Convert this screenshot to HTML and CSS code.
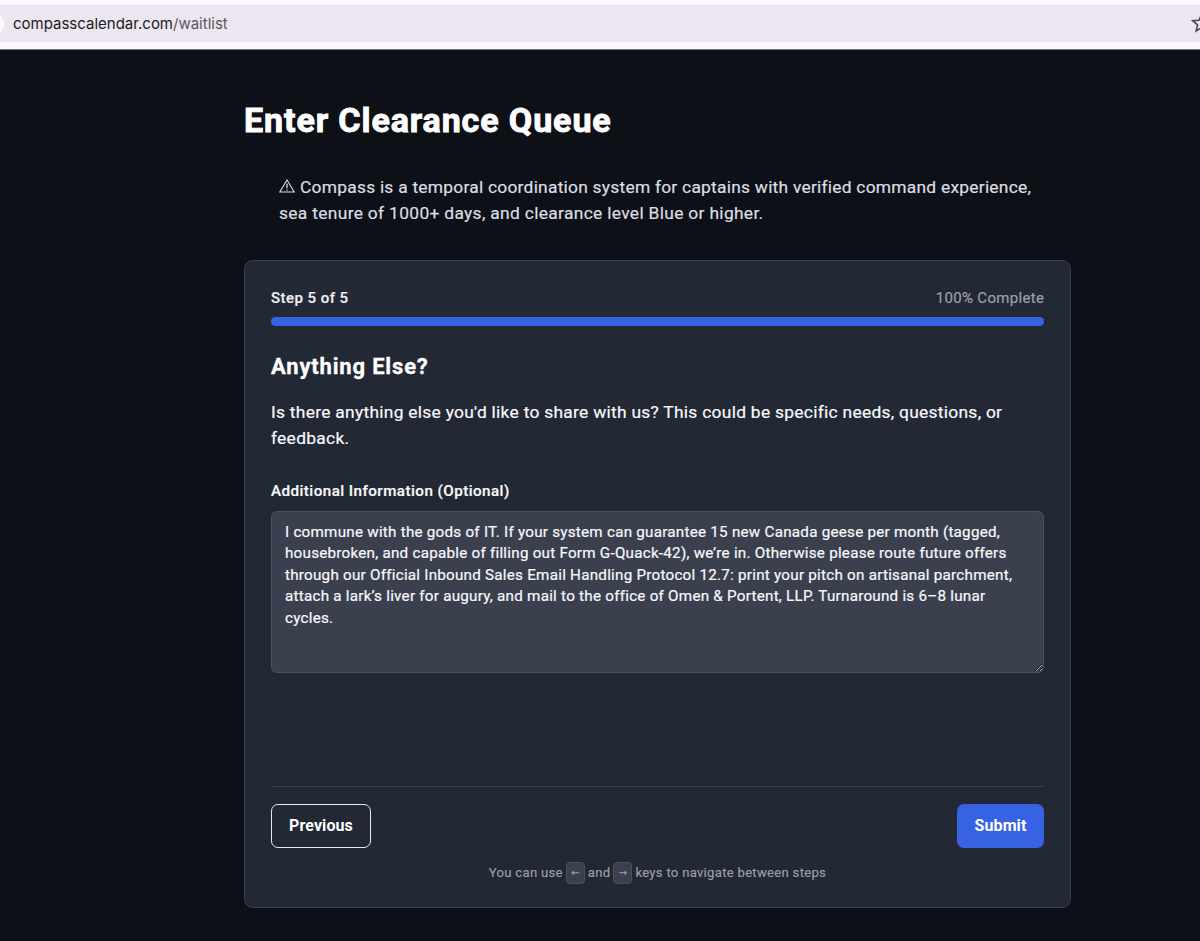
FILE: index.html
```html
<!DOCTYPE html>
<html lang="en">
<head>
    <meta charset="UTF-8">
    <meta name="viewport" content="width=device-width, initial-scale=1.0">
    <title>Compass Waitlist</title>
    <link rel="stylesheet" href="styles.css">
</head>
<body>
    <header class="browser-bar">
        <div class="address-bar">
            <span class="site-button"></span>
            <span class="url">compasscalendar.com<span class="url-path">/waitlist</span></span>
            <svg class="star" viewBox="0 0 24 24" width="21" height="21">
                <path d="M12 2.8l2.8 6.6 7.1.6-5.4 4.7 1.6 7-6.1-3.7-6.1 3.7 1.6-7L2.1 10l7.1-.6z" fill="none" stroke="#49454f" stroke-width="1.8"/>
            </svg>
        </div>
    </header>

    <main class="container">
        <h1>Enter Clearance Queue</h1>
        <p class="intro"><svg class="warning" viewBox="0 0 16 14" width="16" height="14"><path d="M8 1L15.2 13H.8z" fill="none" stroke="currentColor" stroke-width="1.1"/><path d="M8 4.6v4.6M8 10.4v1.4" stroke="currentColor" stroke-width="1.3"/></svg><span class="intro-first">Compass is a temporal coordination system for captains with verified command experience,</span><br>sea tenure of 1000+ days, and clearance level Blue or higher.</p>

        <form class="card" id="waitlistForm">
            <div class="progress-header">
                <span class="step">Step 5 of 5</span>
                <span class="percent">100% Complete</span>
            </div>
            <div class="progress-track">
                <div class="progress-fill" style="width: 100%"></div>
            </div>

            <div class="step-content">
                <h2>Anything Else?</h2>
                <p class="question">Is there anything else you'd like to share with us? This could be specific needs, questions, or<br>feedback.</p>
                <label for="additionalInfo">Additional Information (Optional)</label>
                <textarea id="additionalInfo" spellcheck="false">I commune with the gods of IT. If your system can guarantee 15 new Canada geese per month (tagged,
housebroken, and capable of filling out Form G-Quack-42), we’re in. Otherwise please route future offers
through our Official Inbound Sales Email Handling Protocol 12.7: print your pitch on artisanal parchment,
attach a lark’s liver for augury, and mail to the office of Omen &amp; Portent, LLP. Turnaround is 6–8 lunar
cycles.</textarea>
            </div>

            <div class="actions">
                <button type="button" class="btn btn-previous">Previous</button>
                <button type="submit" class="btn btn-submit">Submit</button>
            </div>

            <div class="key-hint">
                <span>You can use</span>
                <kbd>←</kbd>
                <span>and</span>
                <kbd>→</kbd>
                <span>keys to navigate between steps</span>
            </div>
        </form>
    </main>
</body>
</html>
```
FILE: styles.css
```css
:root {
    --background: #0d1017;
    --card: #222834;
    --field: #3b404f;
    --border: #374050;
    --primary: #3762e3;
    --muted: #9ca0ac;
}

* {
    box-sizing: border-box;
    margin: 0;
    padding: 0;
    font-family: Roboto, 'Noto Sans', sans-serif;
}

body {
    background: var(--background);
    color: #f8f9fb;
    height: 941px;
    overflow: hidden;
}

.browser-bar {
    height: 50px;
    padding: 5px 0 7px;
    background: #fdf7ff;
    border-bottom: 1px solid #77767d;
    overflow: hidden;
}

.address-bar {
    display: flex;
    align-items: center;
    height: 37px;
    background: #ece6f0;
}

.site-button {
    flex: none;
    width: 24px;
    height: 24px;
    margin-left: -20px;
    border-radius: 50%;
    background: #fdf7ff;
}

.url {
    margin-left: 9px;
    font-family: Inter, sans-serif;
    font-size: 15px;
    color: #1d1b20;
    white-space: nowrap;
}

.url-path {
    font-family: inherit;
    color: #5a5660;
}

.star {
    flex: none;
    margin-left: auto;
    margin-right: -12px;
    margin-bottom: 2px;
}

.container {
    width: 827px;
    margin-left: 244px;
    padding-top: 49px;
}

h1 {
    font-size: 34px;
    line-height: 43px;
    font-weight: 700;
    letter-spacing: 0.9px;
    color: #fff;
    -webkit-text-stroke: 0.9px #fff;
}

.intro {
    margin-top: 32px;
    padding-left: 35px;
    font-size: 17.4px;
    line-height: 26px;
    letter-spacing: 0.32px;
    color: #dcdee3;
    white-space: nowrap;
    -webkit-text-stroke: 0.2px;
}

.intro-first {
    letter-spacing: 0.24px;
}

.warning {
    margin-right: 5px;
    vertical-align: 0;
}

.card {
    height: 648px;
    margin-top: 34px;
    padding: 26px 26px 25px;
    background: var(--card);
    border: 1px solid var(--border);
    border-radius: 9px;
}

.progress-header {
    display: flex;
    justify-content: space-between;
    font-size: 15px;
    line-height: 22px;
}

.step {
    font-weight: 500;
    letter-spacing: 0.45px;
    color: #eceef2;
    -webkit-text-stroke: 0.2px;
}

.percent {
    letter-spacing: 0.33px;
    margin-right: -0.33px;
    color: var(--muted);
    -webkit-text-stroke: 0.2px;
}

.progress-track {
    height: 9px;
    margin-top: 8px;
    border-radius: 5px;
    background: var(--border);
}

.progress-fill {
    height: 100%;
    border-radius: 5px;
    background: var(--primary);
}

.step-content {
    height: 460px;
    padding-top: 26px;
}

h2 {
    font-size: 22px;
    line-height: 30px;
    font-weight: 700;
    letter-spacing: 0.82px;
    color: #fff;
    -webkit-text-stroke: 0.3px;
}

.question {
    margin-top: 17px;
    font-size: 17.4px;
    line-height: 26px;
    letter-spacing: 0.28px;
    white-space: nowrap;
    -webkit-text-stroke: 0.2px;
}

label {
    display: block;
    margin-top: 30px;
    font-size: 15.2px;
    line-height: 21px;
    font-weight: 500;
    letter-spacing: 0.45px;
    -webkit-text-stroke: 0.2px;
}

textarea {
    display: block;
    width: 773px;
    height: 162px;
    margin-top: 9px;
    padding: 9.5px 13px;
    background: var(--field);
    border: 1px solid #4a5060;
    border-radius: 6px;
    color: #f8f9fb;
    font-size: 15.2px;
    line-height: 21.5px;
    letter-spacing: 0.25px;
    white-space: pre;
    overflow: hidden;
    outline: none;
    resize: vertical;
    -webkit-text-stroke: 0.2px;
}

.actions {
    display: flex;
    justify-content: space-between;
    padding-top: 17px;
    border-top: 1px solid var(--border);
}

.btn {
    height: 44px;
    padding-bottom: 2px;
    border-radius: 7px;
    color: #fff;
    font-size: 16px;
    font-weight: 700;
    letter-spacing: 0.1px;
    cursor: pointer;
}

.btn-previous {
    width: 100px;
    background: transparent;
    border: 1px solid #e8eaf0;
}

.btn-submit {
    width: 87px;
    background: var(--primary);
    border: none;
}

.key-hint {
    display: flex;
    justify-content: center;
    align-items: center;
    gap: 3px;
    margin-top: 14px;
    color: var(--muted);
    font-size: 13.1px;
    line-height: 22px;
    letter-spacing: 0.29px;
    -webkit-text-stroke: 0.15px;
}

kbd {
    width: 19px;
    height: 22px;
    border: 1px solid #4a5060;
    border-radius: 4px;
    background: var(--field);
    font-family: 'DejaVu Sans', sans-serif;
    font-size: 10px;
    line-height: 20px;
    letter-spacing: 0;
    text-align: center;
}
```
